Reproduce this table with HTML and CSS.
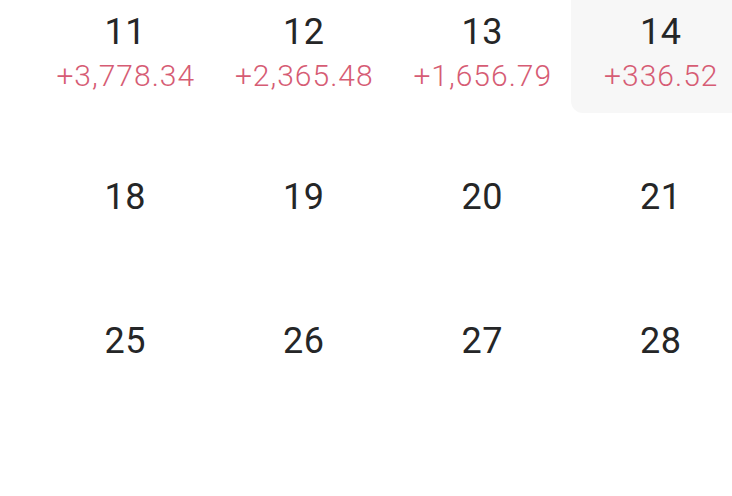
FILE: index.html
```html
<!DOCTYPE html>
<html lang="en">
<head>
<meta charset="utf-8">
<title>Calendar</title>
<link rel="stylesheet" href="styles.css">
</head>
<body>
<div class="calendar">
  <div class="cell"><span class="day">11</span><span class="amt">+3,778.34</span></div>
  <div class="cell"><span class="day">12</span><span class="amt">+2,365.48</span></div>
  <div class="cell"><span class="day">13</span><span class="amt">+1,656.79</span></div>
  <div class="cell selected"><span class="day">14</span><span class="amt">+336.52</span></div>
  <div class="cell"><span class="day">18</span></div>
  <div class="cell"><span class="day">19</span></div>
  <div class="cell"><span class="day">20</span></div>
  <div class="cell"><span class="day">21</span></div>
  <div class="cell"><span class="day">25</span></div>
  <div class="cell"><span class="day">26</span></div>
  <div class="cell"><span class="day">27</span></div>
  <div class="cell"><span class="day">28</span></div>
</div>
</body>
</html>
```
FILE: styles.css
```css
html, body {
  margin: 0;
  padding: 0;
  background: #ffffff;
  overflow: hidden;
  width: 732px;
  height: 496px;
}
body {
  font-family: Roboto, "Noto Sans", sans-serif;
}
.calendar {
  display: grid;
  grid-template-columns: repeat(4, 178.5px);
  grid-auto-rows: 144px;
  margin: -19px 0 0 36px;
  width: 714px;
}
.cell {
  position: relative;
  display: flex;
  flex-direction: column;
  align-items: center;
  justify-content: center;
}
.cell.selected::before {
  content: "";
  position: absolute;
  top: 0;
  left: -1px;
  right: 0;
  bottom: 12px;
  background: #f7f7f7;
  border-radius: 0 0 0 12px;
  z-index: 0;
}
.day, .amt {
  position: relative;
  z-index: 1;
  white-space: nowrap;
}
.day {
  font-size: 36px;
  line-height: 46px;
  color: #252627;
  font-weight: 400;
  letter-spacing: 0.5px;
}
.amt {
  font-size: 30px;
  line-height: 42px;
  color: #d65c74;
  font-weight: 300;
  letter-spacing: 1px;
  padding-left: 1px;
}
```
